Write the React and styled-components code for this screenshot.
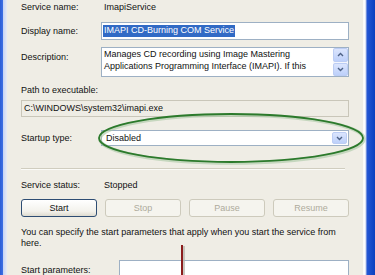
import styled, {createGlobalStyle} from "styled-components";

const GlobalStyle = createGlobalStyle`
    html, body {
        margin: 0;
        padding: 0;
        overflow: hidden;
    }
    body {
        font-family: "Liberation Sans", Arial, sans-serif;
        font-size: 9px;
        color: #111;
    }
`;

const Window = styled.div`
    position: relative;
    display: flex;
    width: 375px;
    height: 275px;
    overflow: hidden;
    background: #efede5;
`;

const LeftFrame = styled.div`
    flex: none;
    width: 7px;
    background: linear-gradient(to right, #2b5dd6 0, #3d70e4 3px, #c6d3f3 3px, #e6ebf7 7px);
`;

const RightFrame = styled.div`
    flex: none;
    width: 12px;
    background: linear-gradient(to right, #fafaf7 0, #ffffff 2px, #b7c5e8 3px, #2557d4 4px, #0b3fbf 12px);
`;

const Content = styled.div`
    flex: 1;
    display: flex;
    flex-direction: column;
    padding: 0 14px;

    & > * {
        flex-shrink: 0;
    }
`;

const Row = styled.div`
    display: grid;
    grid-template-columns: ${p => p.$col || 80}px 1fr;
    align-items: ${p => p.$align || "center"};
    height: ${p => p.$h}px;
    margin-top: ${p => p.$mt || 0}px;
`;

const Label = styled.div`
    line-height: 11px;
    padding-top: ${p => p.$pt || 0}px;
`;

const Value = styled.div`
    line-height: 11px;
    padding-left: 3px;
`;

const TextBox = styled.div`
    position: relative;
    box-sizing: border-box;
    height: ${p => p.$h}px;
    overflow: hidden;
    border: 1px solid ${p => p.$readonly ? "#c9c6b9" : "#9db0c4"};
    background: ${p => p.$readonly ? "#efede5" : "#ffffff"};
    display: flex;
    align-items: ${p => p.$top ? "flex-start" : "center"};
    padding-left: ${p => p.$pl ?? 1}px;
    line-height: ${p => p.$lh || 11}px;
`;

const Selected = styled.span`
    background: #316ac5;
    color: #fff;
    padding: 0 1px 1px;
`;

const DescText = styled.div`
    flex: 1;
    padding-right: 18px;
`;

const ScrollBar = styled.div`
    position: absolute;
    right: 0;
    top: 0;
    bottom: 0;
    width: 15px;
    display: flex;
    flex-direction: column;
    gap: 1px;
    background: #f4f6fc;
`;

const ScrollButton = styled.div`
    flex: 1;
    display: flex;
    align-items: center;
    justify-content: center;
    border: 1px solid #bccdf4;
    border-radius: 2px;
    background: linear-gradient(#dbe5fd, #bdd0fa);
`;

const Select = styled(TextBox)`
    padding-left: 4px;
`;

const SelectButton = styled(ScrollButton)`
    position: absolute;
    right: 1px;
    top: 1px;
    bottom: 1px;
    width: 13px;
`;

const Separator = styled.div`
    height: 1px;
    margin: ${p => p.$mt}px 4px 0 0;
    background: #d0cdbf;
    border-bottom: 1px solid #fbfbf8;
`;

const ButtonBar = styled.div`
    display: grid;
    grid-template-columns: repeat(4, 1fr);
    gap: 8px;
    margin-top: 8px;
    height: 18px;
`;

const Button = styled.div`
    box-sizing: border-box;
    display: flex;
    align-items: center;
    justify-content: center;
    border: 1px solid ${p => p.$disabled ? "#cdcabc" : "#2e4d73"};
    border-radius: 3px;
    color: ${p => p.$disabled ? "#aeab9c" : "#111"};
    background: ${p => p.$disabled
        ? "#f5f4ee"
        : "linear-gradient(#ffffff, #f3f2ec 70%, #dedbd0)"};
`;

const Para = styled.p`
    margin: 10px 0 0;
    line-height: 11px;
`;

const Overlay = styled.svg`
    position: absolute;
    left: 0;
    top: 0;
    pointer-events: none;
`;

function Chevron({up}) {
    return (
        <svg width="7" height="5" viewBox="0 0 7 5">
            <path
                d={up ? "M1 4 L3.5 1.5 L6 4" : "M1 1 L3.5 3.5 L6 1"}
                fill="none"
                stroke="#4d6185"
                strokeWidth="1.4"
            />
        </svg>
    );
}

function App() {
    return (
        <>
            <GlobalStyle/>
            <Window>
                <LeftFrame/>
                <Content>
                    <Row $h={15}>
                        <Label>Service name:</Label>
                        <Value>ImapiService</Value>
                    </Row>
                    <Row $h={18} $mt={7}>
                        <Label>Display name:</Label>
                        <TextBox $h={18}>
                            <Selected>IMAPI CD-Burning COM Service</Selected>
                        </TextBox>
                    </Row>
                    <Row $h={30} $mt={7} $align="start">
                        <Label $pt={5}>Description:</Label>
                        <TextBox $h={30} $top $lh={12} $pl={2}>
                            <DescText>
                                Manages CD recording using Image Mastering Applications Programming
                                Interface (IMAPI). If this
                            </DescText>
                            <ScrollBar>
                                <ScrollButton><Chevron up/></ScrollButton>
                                <ScrollButton><Chevron/></ScrollButton>
                            </ScrollBar>
                        </TextBox>
                    </Row>
                    <Row $h={12} $mt={7} $col={328}>
                        <Label>Path to executable:</Label>
                    </Row>
                    <TextBox $h={17} $readonly $pl={2} style={{marginTop: 4}}>
                        C:\WINDOWS\system32\imapi.exe
                    </TextBox>
                    <Row $h={16} $mt={13}>
                        <Label>Startup type:</Label>
                        <Select $h={16}>
                            Disabled
                            <SelectButton><Chevron/></SelectButton>
                        </Select>
                    </Row>
                    <Separator $mt={22}/>
                    <Row $h={12} $mt={9}>
                        <Label>Service status:</Label>
                        <Value>Stopped</Value>
                    </Row>
                    <ButtonBar>
                        <Button>Start</Button>
                        <Button $disabled>Stop</Button>
                        <Button $disabled>Pause</Button>
                        <Button $disabled>Resume</Button>
                    </ButtonBar>
                    <Para>
                        You can specify the start parameters that apply when you start the service from
                        here.
                    </Para>
                    <Row $h={30} $mt={11} $col={98} $align="start">
                        <Label $pt={5}>Start parameters:</Label>
                        <TextBox $h={30}/>
                    </Row>
                </Content>
                <RightFrame/>
                <Overlay width="375" height="275" viewBox="0 0 375 275">
                    <ellipse cx="232" cy="139" rx="132" ry="24" fill="none" stroke="#a9c8a4" strokeWidth="3.5" opacity="0.6"/>
                    <ellipse cx="231" cy="138" rx="132" ry="24" fill="none" stroke="#2c7a2c" strokeWidth="1.8"/>
                    <line x1="184" y1="246" x2="184" y2="275" stroke="#b9b6ae" strokeWidth="1.5"/>
                    <line x1="182" y1="245" x2="182" y2="275" stroke="#8b1c1c" strokeWidth="2"/>
                </Overlay>
            </Window>
        </>
    );
}

export default App;
